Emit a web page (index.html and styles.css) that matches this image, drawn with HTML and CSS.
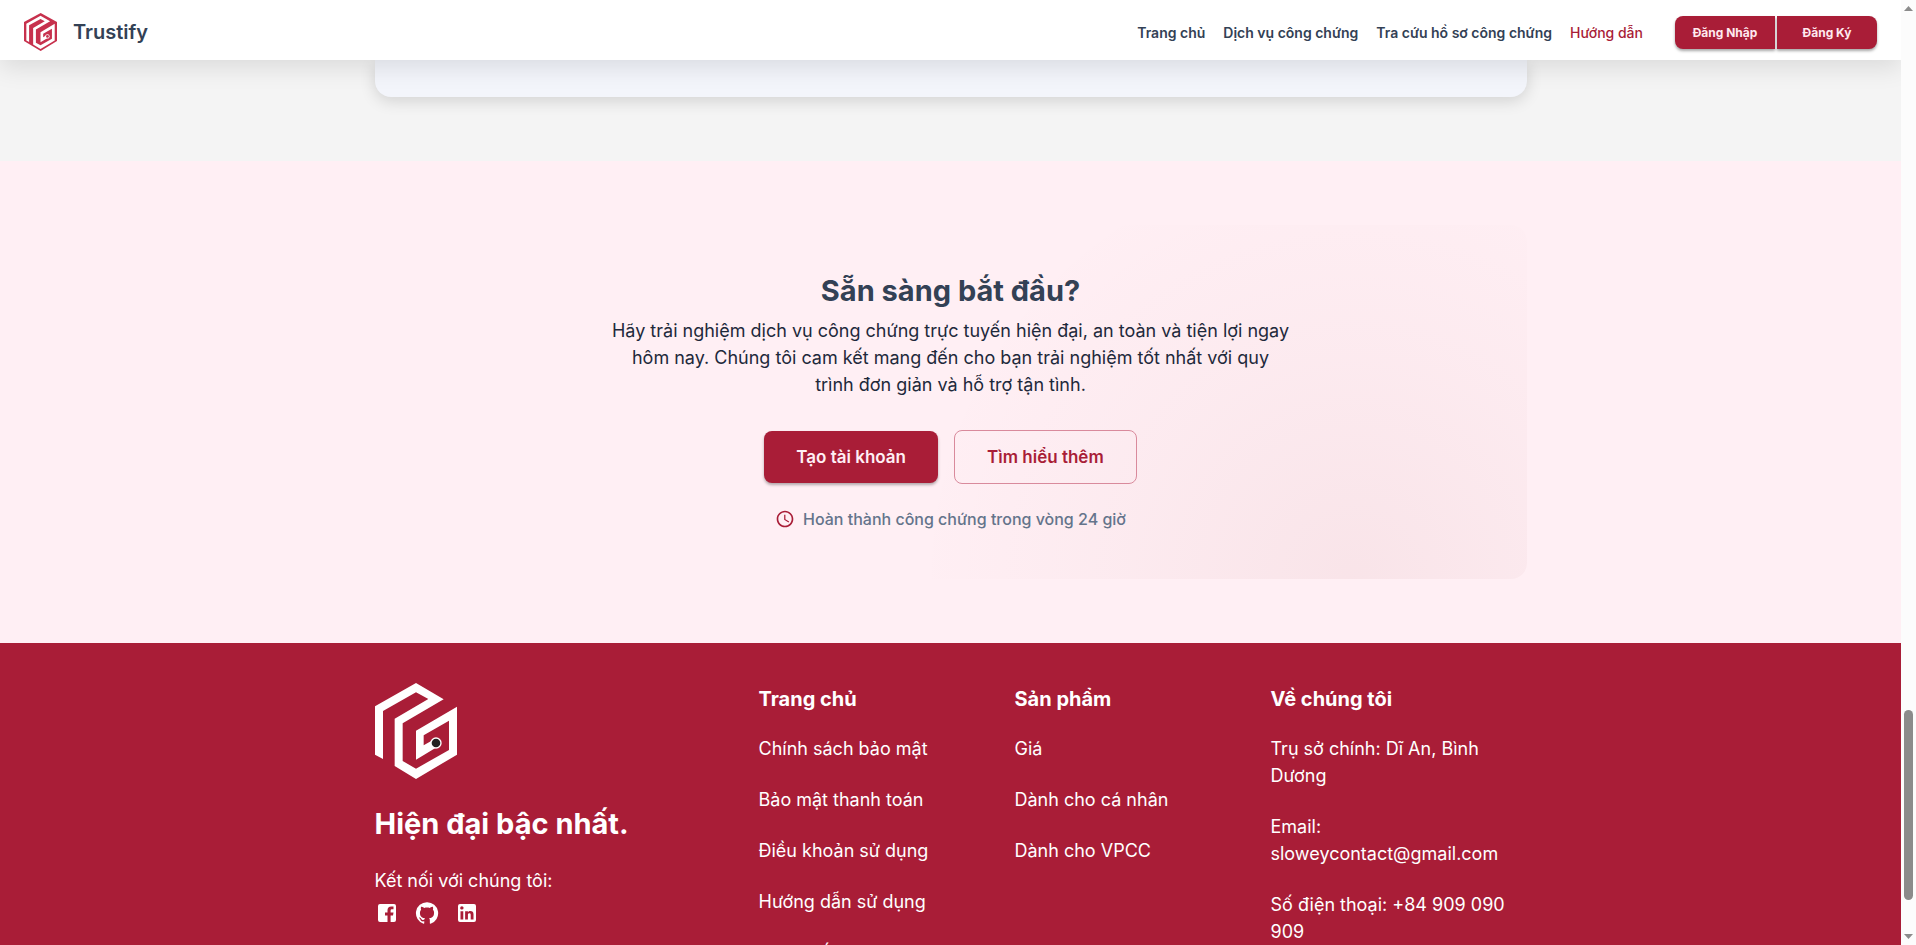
FILE: index.html
```html
<!DOCTYPE html>
<html lang="vi">
<head>
<meta charset="utf-8">
<title>Trustify</title>
<link rel="stylesheet" href="styles.css">
</head>
<body>
<div class="viewport">
  <div class="page">
    <header class="topbar">
      <a class="brand" href="#">
        <svg class="brand-logo" viewBox="0 0 99 114" aria-hidden="true">
          <polygon fill="#c7314d" points="50,0 99,27 99,84 50,114 0,84 0,27"/>
          <g transform="translate(7 8) scale(.346)">
            <polygon fill="#fff" points="0,215 0,70 123,0 206,49 83,121 83,234 123,257 222,201 222,113 146,157 146,187 170,173 185,193 123,230 123,143 246,71 246,215 123,288 59,249 59,107 160,48 123,28 24,84 24,228"/>
            <circle cx="183" cy="180" r="19" fill="#fff"/>
            <circle cx="183" cy="180" r="12" fill="#c7314d"/>
          </g>
        </svg>
        <span>Trustify</span>
      </a>
      <nav class="nav">
        <a href="#">Trang chủ</a>
        <a href="#">Dịch vụ công chứng</a>
        <a href="#">Tra cứu hồ sơ công chứng</a>
        <a class="active" href="#">Hướng dẫn</a>
      </nav>
      <div class="auth">
        <button type="button">Đăng Nhập</button>
        <button type="button">Đăng Ký</button>
      </div>
    </header>

    <section class="previous">
      <div class="container"><div class="previous-card"></div></div>
    </section>

    <section class="cta">
      <div class="container">
        <div class="cta-card">
          <h2>Sẵn sàng bắt đầu?</h2>
          <p class="lead">Hãy trải nghiệm dịch vụ công chứng trực tuyến hiện đại, an toàn và tiện lợi ngay<br>hôm nay. Chúng tôi cam kết mang đến cho bạn trải nghiệm tốt nhất với quy<br>trình đơn giản và hỗ trợ tận tình.</p>
          <div class="actions">
            <button type="button" class="btn primary">Tạo tài khoản</button>
            <button type="button" class="btn outlined">Tìm hiểu thêm</button>
          </div>
          <p class="note">
            <svg width="20" height="20" viewBox="0 0 24 24" fill="#a91d37" aria-hidden="true"><path d="M11.99 2C6.47 2 2 6.48 2 12s4.47 10 9.99 10C17.52 22 22 17.52 22 12S17.52 2 11.99 2zM12 20c-4.42 0-8-3.58-8-8s3.58-8 8-8 8 3.58 8 8-3.58 8-8 8zm.5-13H11v6l5.25 3.15.75-1.23-4.5-2.67z"/></svg>
            <span>Hoàn thành công chứng trong vòng 24 giờ</span>
          </p>
        </div>
      </div>
    </section>

    <footer class="footer">
      <div class="container footer-grid">
        <div class="about">
          <svg class="footer-logo" viewBox="0 0 246 288" aria-hidden="true">
            <polygon fill="#fff" points="0,215 0,70 123,0 206,49 83,121 83,234 123,257 222,201 222,113 146,157 146,187 170,173 185,193 123,230 123,143 246,71 246,215 123,288 59,249 59,107 160,48 123,28 24,84 24,228"/>
            <circle cx="183" cy="180" r="17" fill="#fff"/>
            <circle cx="183" cy="180" r="13" fill="#222"/>
          </svg>
          <h2>Hiện đại bậc nhất.</h2>
          <p>Kết nối với chúng tôi:</p>
          <div class="social">
            <a href="#" aria-label="Facebook"><svg viewBox="0 0 24 24" fill="#fff"><path d="M5 3h14a2 2 0 0 1 2 2v14a2 2 0 0 1-2 2h-3.400v-6.500H18l.5-3h-2.900V9.600c0-.9.500-1.400 1.500-1.400h1.400V5.400h-2.300c-2.400 0-3.700 1.400-3.700 3.800v2.300H10v3h2.500V21H5a2 2 0 0 1-2-2V5a2 2 0 0 1 2-2z"/></svg></a>
            <a href="#" aria-label="GitHub"><svg viewBox="0 0 24 24" fill="#fff"><path d="M12 1.270a11 11 0 0 0-3.480 21.460c.55.090.73-.28.730-.55v-1.840c-3.030.64-3.670-1.460-3.670-1.460-.55-1.290-1.280-1.650-1.280-1.650-.92-.65.100-.65.100-.65 1.100 0 1.730 1.100 1.730 1.100.92 1.650 2.570 1.200 3.210.92a2 2 0 0 1 .64-1.470c-2.470-.27-5.040-1.190-5.040-5.500 0-1.100.46-2.100 1.200-2.840a3.760 3.760 0 0 1 0-2.930s.91-.28 3.110 1.100c1.800-.49 3.700-.49 5.500 0 2.100-1.380 3.020-1.100 3.020-1.100a3.760 3.760 0 0 1 .1 2.930c.73.740 1.190 1.740 1.190 2.840 0 4.320-2.580 5.230-5.040 5.500.45.370.82.920.820 2.020v3.030c0 .27.100.64.730.55A11 11 0 0 0 12 1.270"/></svg></a>
            <a href="#" aria-label="LinkedIn"><svg viewBox="0 0 24 24" fill="#fff"><path d="M19 3a2 2 0 0 1 2 2v14a2 2 0 0 1-2 2H5a2 2 0 0 1-2-2V5a2 2 0 0 1 2-2h14m-.5 15.500v-5.300a3.260 3.260 0 0 0-3.260-3.260c-.85 0-1.840.52-2.320 1.300v-1.110h-2.790v8.370h2.790v-4.930c0-.77.620-1.400 1.390-1.400a1.400 1.400 0 0 1 1.400 1.400v4.930h2.790M6.880 8.560a1.680 1.680 0 0 0 1.680-1.680c0-.93-.75-1.690-1.680-1.690a1.690 1.690 0 0 0-1.690 1.690c0 .93.760 1.680 1.690 1.680m1.390 9.940v-8.370H5.500v8.370h2.770z"/></svg></a>
          </div>
        </div>
        <div>
          <h3>Trang chủ</h3>
          <ul>
            <li><a href="#">Chính sách bảo mật</a></li>
            <li><a href="#">Bảo mật thanh toán</a></li>
            <li><a href="#">Điều khoản sử dụng</a></li>
            <li><a href="#">Hướng dẫn sử dụng</a></li>
            <li><a href="#">Quy chế hoạt động</a></li>
          </ul>
        </div>
        <div>
          <h3>Sản phẩm</h3>
          <ul>
            <li><a href="#">Giá</a></li>
            <li><a href="#">Dành cho cá nhân</a></li>
            <li><a href="#">Dành cho VPCC</a></li>
          </ul>
        </div>
        <div>
          <h3>Về chúng tôi</h3>
          <ul>
            <li>Trụ sở chính: Dĩ An, Bình Dương</li>
            <li>Email: sloweycontact@gmail.com</li>
            <li>Số điện thoại: +84 909 090 909</li>
          </ul>
        </div>
      </div>
    </footer>
  </div>
  <div class="scrollbar" aria-hidden="true">
    <svg width="9" height="5" viewBox="0 0 9 5"><path d="M4.500 0 9 5H0z" fill="#8b8b8b"/></svg>
    <div class="track"><div class="thumb"></div></div>
    <svg width="9" height="5" viewBox="0 0 9 5"><path d="M0 0h9L4.500 5z" fill="#8b8b8b"/></svg>
  </div>
</div>
</body>
</html>
```
FILE: styles.css
```css
* { box-sizing: border-box; }
body, h2, h3, p, ul { margin: 0; padding: 0; }
body {
  font-family: Inter, "Open Sans", sans-serif;
  font-size: 18px;
  line-height: 27px;
  color: #1e293b;
}
a { color: inherit; text-decoration: none; }
button { font-family: inherit; cursor: pointer; }
ul { list-style: none; }

.viewport { display: flex; height: 100vh; overflow: hidden; }
.page { flex: 1; min-width: 0; overflow: hidden; }
.container { max-width: 1200px; margin: 0 auto; padding: 0 24px; }

.topbar {
  position: relative;
  z-index: 1;
  display: flex;
  align-items: center;
  height: 60px;
  padding: 4px 24px 0;
  background: #fff;
  box-shadow: 0 8px 24px rgba(0, 0, 0, .1);
}
.brand {
  display: flex;
  align-items: center;
  gap: 16px;
  margin-right: auto;
  font-size: 20px;
  font-weight: 600;
  color: #334155;
}
.brand-logo { width: 33px; height: 38px; }
.nav {
  display: flex;
  gap: 18px;
  margin-right: 32px;
  font-size: 14px;
  font-weight: 600;
  color: #334155;
}
.nav .active { color: #a91d37; font-weight: 500; }
.auth { display: flex; gap: 2px; }
.auth button {
  width: 100px;
  height: 33px;
  padding: 0;
  border: 0;
  background: #a91d37;
  color: #ffe9ef;
  font-size: 12px;
  font-weight: 700;
  box-shadow: 0 2px 3px rgba(0, 0, 0, .35);
}
.auth button:first-child { border-radius: 8px 0 0 8px; }
.auth button:last-child { border-radius: 0 8px 8px 0; }

.previous { padding-bottom: 64px; background: #f4f4f4; }
.previous-card {
  height: 37px;
  border-radius: 0 0 16px 16px;
  background: #f3f5fb;
  box-shadow: 0 4px 16px rgba(0, 0, 0, .14);
}

.cta { padding: 64px 0; background: #ffeff4; }
.cta-card {
  display: flex;
  flex-direction: column;
  align-items: center;
  padding: 48px;
  border-radius: 16px;
  text-align: center;
  background: radial-gradient(circle at 85% 100%, rgba(150, 50, 50, .06), rgba(150, 50, 50, .025) 240px, transparent 440px);
}
.cta h2 { margin-bottom: 8px; font-size: 29px; line-height: 36px; color: #334155; }
.lead { margin-bottom: 32px; }
.actions { display: flex; align-items: center; gap: 16px; margin-bottom: 23px; }
.btn { padding: 0 32px; border-radius: 8px; font-size: 17px; font-weight: 600; }
.primary {
  height: 52px;
  border: 0;
  background: #a91d37;
  color: #ffeff4;
  box-shadow: 0 2px 3px rgba(0, 0, 0, .3);
}
.outlined { height: 54px; border: 1px solid #d98a9c; background: none; color: #a91d37; }
.note { display: flex; align-items: center; gap: 8px; font-size: 16px; font-weight: 500; line-height: 24px; color: #64748b; }

.footer { padding: 40px 0; background: #a91d37; color: #fff; }
.footer-grid { display: grid; grid-template-columns: 3fr 2fr 2fr 2fr; }
.footer h3 { margin-bottom: 20px; font-size: 20px; line-height: 32px; }
.footer li { margin-bottom: 24px; }
.footer-logo { display: block; width: 82px; height: 96px; margin-bottom: 24px; }
.about h2 { margin-bottom: 22px; font-size: 29px; line-height: 42px; }
.social { display: flex; gap: 16px; margin-top: 7px; }
.social svg { display: block; width: 24px; height: 24px; }

.scrollbar {
  display: flex;
  flex-direction: column;
  align-items: center;
  width: 15px;
  padding: 6px 0;
  background: #fcfcfc;
}
.track { display: flex; flex: 1; flex-direction: column; justify-content: flex-end; padding-bottom: 34px; }
.thumb { width: 9px; height: 190px; border-radius: 5px; background: #8b8b8b; }
```
